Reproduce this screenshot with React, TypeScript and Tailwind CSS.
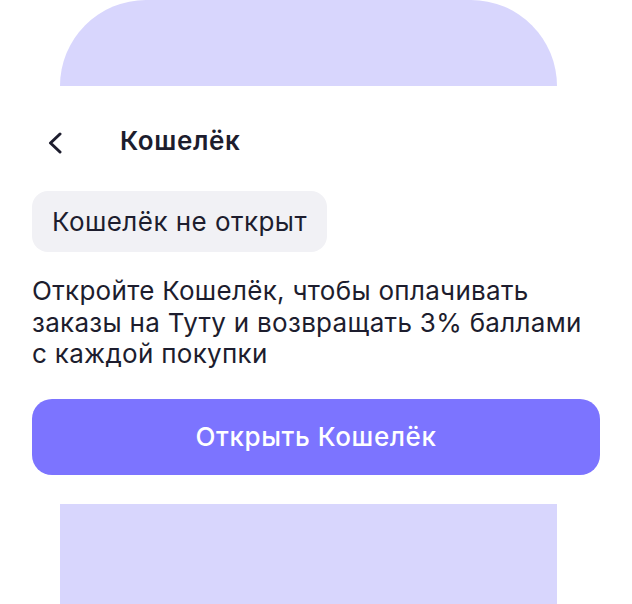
import React from "react";

export default function App() {
  return (
    <div
      className="w-[632px] h-[604px] bg-white overflow-hidden flex flex-col"
      style={{ fontFamily: "Inter, 'Noto Sans', sans-serif" }}
    >
      <div className="ml-[60px] w-[497px] h-[86px] shrink-0 bg-[#d8d6fd] rounded-t-[90px]" />
      <div className="flex flex-col px-[32px] text-[#1d1d2e]">
        <div className="flex items-center h-[60px] mt-[25px]">
          <svg width="14" height="22" viewBox="0 0 14 22" className="ml-[16px] mt-[4px]" fill="none">
            <path d="M12 2 L2.5 11 L12 20" stroke="#1d1d2e" strokeWidth="3" strokeLinecap="round" strokeLinejoin="round" />
          </svg>
          <span className="ml-[58px] text-[26px] font-semibold leading-[32px] tracking-[0.6px]">Кошелёк</span>
        </div>
        <div className="mt-[20px] self-start h-[61px] flex items-center px-[20px] rounded-[16px] bg-[#f1f1f5]">
          <span className="text-[26px] leading-[32px] tracking-[0.45px]">Кошелёк не открыт</span>
        </div>
        <p className="mt-[23px] text-[26px] leading-[31.5px] tracking-[0.3px]">
          Откройте Кошелёк, чтобы оплачивать
          <br />
          заказы на Туту и возвращать 3% баллами
          <br />с каждой покупки
        </p>
        <button className="mt-[29.5px] h-[76px] w-full rounded-[20px] bg-[#7c74ff] text-white text-[26px] leading-[32px] font-medium tracking-[0.6px] flex items-center justify-center">
          Открыть Кошелёк
        </button>
      </div>
      <div className="ml-[60px] mt-[29px] w-[497px] h-[100px] shrink-0 bg-[#d8d6fd]" />
    </div>
  );
}
